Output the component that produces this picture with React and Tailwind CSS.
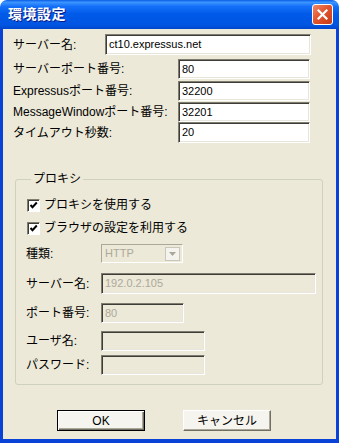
import React from "react";

const font = { fontFamily: '"Liberation Sans", "Noto Sans CJK JP", sans-serif' };

const Field = ({ value, disabled, className }) => (
  <div
    className={`flex items-center h-[20px] pl-[3px] border border-t-[#7f7d70] border-l-[#7f7d70] border-b-white border-r-white shadow-[inset_1px_1px_0_#3d3c36,inset_-1px_-1px_0_#e8e6dc] text-[11px] ${
      disabled ? "bg-[#ece9d8] text-[#aca899]" : "bg-white text-black"
    } ${className || ""}`}
  >
    {value}
  </div>
);

const Check = ({ label }) => (
  <div className="flex items-center gap-[4px] ml-[1px]">
    <div className="w-[13px] h-[13px] bg-white border border-t-[#7f7d70] border-l-[#7f7d70] border-b-white border-r-white shadow-[inset_1px_1px_0_#3d3c36] flex items-center justify-center">
      <svg width="9" height="9" viewBox="0 0 9 9">
        <path d="M1.5 4 L3.5 6.2 L7.8 1.5" fill="none" stroke="#000" strokeWidth="2" />
      </svg>
    </div>
    <span className="text-[12px] leading-[14px]">{label}</span>
  </div>
);

export default function App() {
  return (
    <div style={font} className="w-[339px] h-[443px] flex flex-col bg-white text-black">
      {/* title bar */}
      <div className="h-[29px] rounded-t-[7px] flex items-center justify-between pl-[8px] pr-[6px] bg-[linear-gradient(to_bottom,#0a5de6_0%,#3d95ff_8%,#1470f8_22%,#0059e8_50%,#0056e2_85%,#0046cd_100%)]">
        <span className="text-white font-bold text-[14px] tracking-[0.5px] [text-shadow:1px_1px_0_#0a1883]">環境設定</span>
        <div className="w-[21px] h-[21px] rounded-[3px] border border-white bg-[linear-gradient(135deg,#f08a6a_0%,#e2552e_45%,#c63a17_100%)] flex items-center justify-center">
          <svg width="11" height="11" viewBox="0 0 11 11">
            <path d="M1.5 1.5 L9.5 9.5 M9.5 1.5 L1.5 9.5" stroke="#fff" strokeWidth="2.2" strokeLinecap="square" />
          </svg>
        </div>
      </div>

      {/* body */}
      <div className="flex-1 flex flex-col bg-[#ece9d8] border-x-[3px] border-b-[4px] border-[#0842d6]">
        <div className="pt-[5px] pl-[10px] text-[12px]">
          <div className="flex items-center h-[21px]">
            <span className="w-[92px]">サーバー名:</span>
            <Field value="ct10.expressus.net" className="w-[206px] h-[21px]" />
          </div>
          <div className="flex items-center mt-[4px]">
            <span className="w-[165px]">サーバーポート番号:</span>
            <Field value="80" className="w-[132px]" />
          </div>
          <div className="flex items-center mt-[2px]">
            <span className="w-[165px]">Expressusポート番号:</span>
            <Field value="32200" className="w-[132px]" />
          </div>
          <div className="flex items-center mt-[1px]">
            <span className="w-[165px]">MessageWindowポート番号:</span>
            <Field value="32201" className="w-[132px]" />
          </div>
          <div className="flex items-center">
            <span className="w-[165px]">タイムアウト秒数:</span>
            <Field value="20" className="w-[132px] h-[21px]" />
          </div>
        </div>

        <fieldset className="mt-[29px] ml-[12px] w-[308px] border border-[#d0d0bf] rounded-[3px] pl-[10px] pb-[9px] text-[12px]">
          <legend className="ml-[5px] px-[2px] leading-[14px] text-[12px] text-black">プロキシ</legend>
          <div className="mt-[12px]">
            <Check label="プロキシを使用する" />
          </div>
          <div className="mt-[9px]">
            <Check label="ブラウザの設定を利用する" />
          </div>
          <div className="flex items-center mt-[9px]">
            <span className="w-[75px] text-black">種類:</span>
            <div className="w-[82px] h-[19px] flex items-center justify-between pl-[3px] pr-[2px] bg-[#ece9d8] border border-t-[#aca899] border-l-[#aca899] border-b-white border-r-white text-[11px] text-[#aca899]">
              <span>HTTP</span>
              <div className="w-[15px] h-[14px] flex items-center justify-center bg-[#f4f3ee] border border-[#c9c7ba]">
                <svg width="7" height="4" viewBox="0 0 7 4">
                  <path d="M0 0 H7 L3.5 4 Z" fill="#aca899" />
                </svg>
              </div>
            </div>
          </div>
          <div className="flex items-center mt-[10px]">
            <span className="w-[75px]">サーバー名:</span>
            <Field value="192.0.2.105" disabled className="w-[215px] h-[21px]" />
          </div>
          <div className="flex items-center mt-[9px]">
            <span className="w-[75px]">ポート番号:</span>
            <Field value="80" disabled className="w-[83px]" />
          </div>
          <div className="flex items-center mt-[8px]">
            <span className="w-[75px]">ユーザ名:</span>
            <Field value="" disabled className="w-[104px]" />
          </div>
          <div className="flex items-center mt-[4px]">
            <span className="w-[75px]">パスワード:</span>
            <Field value="" disabled className="w-[104px]" />
          </div>
        </fieldset>

        <div className="flex gap-[38px] ml-[54px] mt-[25px]">
          <button className="w-[88px] h-[21px] bg-[#f5f4ee] border border-black shadow-[inset_1px_1px_0_#fff,inset_-1px_-1px_0_#716f64,inset_-2px_-2px_0_#aca899] text-[12px]">
            OK
          </button>
          <button className="w-[88px] h-[21px] bg-[#f5f4ee] border border-t-white border-l-white border-b-[#716f64] border-r-[#716f64] shadow-[inset_-1px_-1px_0_#aca899] text-[12px]">
            キャンセル
          </button>
        </div>
      </div>
    </div>
  );
}
